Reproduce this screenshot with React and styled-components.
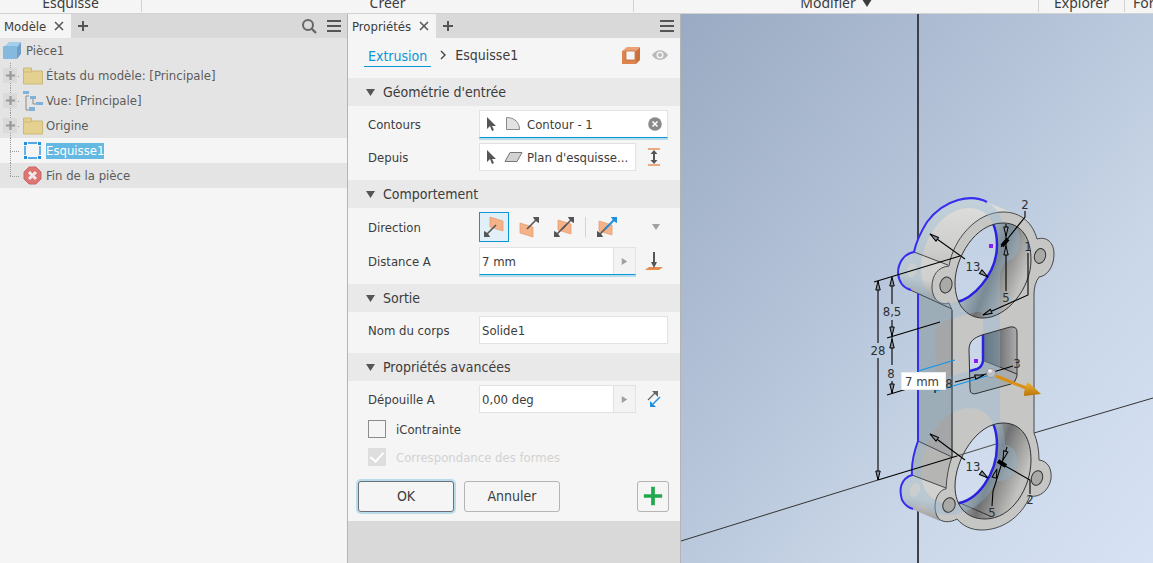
import React, { useState } from "react";
import styled, { createGlobalStyle, css } from "styled-components";

const GlobalStyle = createGlobalStyle`
  * {
    box-sizing: border-box;
  }
  body {
    margin: 0;
    color: #3c3c3c;
    font-family: "DejaVu Sans Condensed", "DejaVu Sans", sans-serif;
    font-size: 13px;
  }
  button,
  input {
    font: inherit;
    color: inherit;
  }
  svg {
    display: block;
    flex: none;
  }
`;

const Page = styled.div`
  display: flex;
  flex-direction: column;
  min-height: 100vh;
  background: #f5f5f5;
`;

/* ---------- ribbon ---------- */

const Ribbon = styled.header`
  display: grid;
  grid-template-columns: 142fr 492fr 405fr 86fr 28fr;
  height: 14px;
  overflow: hidden;
  border-bottom: 1px solid #d2d2d2;
`;

const RibbonGroup = styled.div`
  display: flex;
  min-width: 0;
  height: 12px;
  align-items: flex-end;
  justify-content: ${(p) => (p.$last ? "flex-start" : "center")};
  padding-left: ${(p) => (p.$last ? "8px" : "0")};
  border-right: ${(p) => (p.$last ? "none" : "1px solid #d2d2d2")};
  overflow: hidden;
`;

const RibbonLabel = styled.span`
  display: flex;
  align-items: center;
  gap: 6px;
  font-family: "Noto Sans", sans-serif;
  font-size: 14px;
  line-height: 18px;
  white-space: nowrap;
`;

const Workspace = styled.div`
  display: flex;
  flex: 1;
`;

/* ---------- shared panel parts ---------- */

const TabBar = styled.div`
  display: flex;
  height: 24px;
  align-items: center;
  background: #d9d9d9;
`;

const Tab = styled.div`
  display: flex;
  height: 24px;
  align-items: center;
  gap: 7px;
  padding: 0 6px 0 4px;
  background: #f5f5f5;
`;

const IconButton = styled.button`
  display: flex;
  align-items: center;
  justify-content: center;
  padding: 0;
  border: 0;
  background: none;
`;

const TabTools = styled.div`
  display: flex;
  gap: 10px;
  margin-left: auto;
  padding-right: 6px;
`;

const AddTab = styled(IconButton)`
  width: 24px;
  height: 24px;
`;

/* ---------- model browser ---------- */

const Browser = styled.aside`
  flex: none;
  width: 348px;
  border-right: 1px solid #b4b4b4;
`;

const Tree = styled.ul`
  margin: 0;
  padding: 0;
  list-style: none;
  background: #e4e4e4;
`;

const TreeRow = styled.li`
  display: flex;
  height: 25px;
  align-items: center;
  gap: 3px;
  padding-left: ${(p) => (p.$root ? "3px" : "0")};
  background: ${(p) => (p.$selected ? "#f5f5f5" : "transparent")};
  color: #5c5c5c;
`;

const Branch = styled.span`
  display: flex;
  width: 20px;
  height: 25px;
  align-items: center;
  padding-left: 3px;
  background:
    repeating-linear-gradient(to bottom, #9a9a9a 0 1px, transparent 1px 2px)
      10px 0 / 1px ${(p) => (p.$last ? "14px" : "25px")} no-repeat,
    repeating-linear-gradient(to right, #9a9a9a 0 1px, transparent 1px 2px)
      10px 13px / 10px 1px no-repeat;
`;

const Expander = styled(IconButton)`
  width: 14px;
  height: 15px;
  background: #dadada;
`;

const TreeLabel = styled.span`
  line-height: 16px;
  ${(p) =>
    p.$selected &&
    css`
      color: #fff;
      background: #64b9e2;
    `}
`;

/* ---------- property panel ---------- */

const Properties = styled.section`
  flex: none;
  width: 333px;
  border-right: 1px solid #b4b4b4;
  background: #d9d9d9;
`;

const Form = styled.form`
  background: #f5f5f5;
`;

const Crumbs = styled.nav`
  display: flex;
  height: 40px;
  align-items: center;
  gap: 6px;
  padding: 0 11px 6px 16px;
  font-size: 14px;
`;

const CrumbLink = styled.a`
  padding: 2px 4px 0;
  border-bottom: 1px solid #0a96d7;
  color: #0a96d7;
  line-height: 20px;
  text-decoration: none;
`;

const CrumbTools = styled.div`
  display: flex;
  align-items: center;
  gap: 10px;
  margin-left: auto;
`;

const SectionTitle = styled.h2`
  display: flex;
  height: 28px;
  align-items: center;
  gap: 8px;
  margin: 0;
  padding-left: 18px;
  background: #e9e9e9;
  font-size: 14px;
  font-weight: normal;
`;

const SectionBody = styled.div`
  display: flex;
  flex-direction: column;
  gap: 5px;
  padding: 4px 12px 9px 20px;
`;

const Row = styled.div`
  display: grid;
  grid-template-columns: 111px 1fr ${(p) => (p.$tool ? "32px" : "")};
  min-height: 28px;
  align-items: center;
`;

const ToolSlot = styled(IconButton)`
  padding-left: 4px;
`;

const Field = styled.div`
  display: flex;
  min-width: 0;
  height: 28px;
  align-items: stretch;
  border: 1px solid #e2e2e2;
  background: #fff;
  ${(p) =>
    p.$active &&
    css`
      border-bottom-color: #0a96d7;
      box-shadow: 0 2px 0 #b9dcea;
    `}
`;

const FieldIcons = styled.span`
  display: flex;
  align-items: center;
  gap: 7px;
  padding: 0 2px 0 7px;
`;

const TextInput = styled.input`
  flex: 1;
  min-width: 0;
  padding: 0 2px;
  border: 0;
  outline: 0;
  background: none;
`;

const ClearButton = styled(IconButton)`
  padding-right: 5px;
`;

const Flyout = styled(IconButton)`
  width: 22px;
  border-left: 1px solid #e2e2e2;
  background: #f3f3f3;
`;

const Directions = styled.div`
  display: flex;
  align-items: center;
  gap: 5px;
`;

const DirectionButton = styled(IconButton)`
  width: 30px;
  height: 30px;
  border: 1px solid ${(p) => (p.$on ? "#0a96d7" : "transparent")};
  background: ${(p) => (p.$on ? "#e1f0f8" : "none")};
`;

const Divider = styled.span`
  width: 1px;
  height: 20px;
  margin: 0 1px;
  background: #d4d4d4;
`;

const MoreButton = styled(IconButton)`
  width: 24px;
  height: 24px;
  margin-left: auto;
`;

const Checks = styled.div`
  display: flex;
  flex-direction: column;
  gap: 10px;
  padding-top: 2px;
`;

const CheckLabel = styled.label`
  display: flex;
  height: 18px;
  align-items: center;
  gap: 10px;
  color: ${(p) => (p.$off ? "#d2d2d2" : "inherit")};
`;

const CheckBox = styled.input`
  appearance: none;
  display: grid;
  place-content: center;
  width: 18px;
  height: 18px;
  margin: 0;
  border: 1px solid #8c8c8c;

  &:checked {
    border-color: #dedede;
    background: #dedede;
  }
  &:checked::after {
    content: "";
    width: 6px;
    height: 11px;
    margin-bottom: 3px;
    border: solid #fff;
    border-width: 0 2px 2px 0;
    transform: rotate(42deg);
  }
`;

const Footer = styled.div`
  display: flex;
  gap: 10px;
  padding: 6px 11px 9px 10px;
`;

const PushButton = styled.button`
  width: ${(p) => (p.$square ? "32px" : "96px")};
  height: 31px;
  display: flex;
  align-items: center;
  justify-content: center;
  margin-left: ${(p) => (p.$square ? "auto" : "0")};
  padding: 0 0 2px;
  border: 1px solid ${(p) => (p.$primary ? "#6e6e78" : "#b4b4b4")};
  border-radius: 3px;
  background: #f5f5f5;
  box-shadow: ${(p) => (p.$primary ? "0 0 0 2px #b9dcea" : "none")};
  font-size: 14px;
`;

/* ---------- 3D view ---------- */

const Viewport = styled.main`
  position: relative;
  flex: 1;
  min-width: 0;
  overflow: hidden;
  background: linear-gradient(130deg, #9aaac2 0%, #b5c4d9 42%, #cad7e8 70%, #d7e3f4 100%);
`;

const Scene = styled.svg`
  width: 100%;
  height: 100%;
`;

const Bubble = styled.input`
  position: absolute;
  left: 220px;
  top: 358px;
  width: 45px;
  height: 18px;
  padding: 0 3px;
  border: 1px solid #ececec;
  background: #fff;
`;

/* ---------- icons ---------- */

const Cross = () => (
  <svg width="12" height="12" viewBox="0 0 12 12">
    <path d="M2 2l8 8M10 2l-8 8" stroke="#555" strokeWidth="1.5" />
  </svg>
);

const Plus = ({ size = 12, color = "#555", weight = 2 }) => (
  <svg width={size} height={size} viewBox="0 0 12 12">
    <path d="M6 1v10M1 6h10" stroke={color} strokeWidth={weight} />
  </svg>
);

const Menu = () => (
  <svg width="14" height="14" viewBox="0 0 14 14">
    <path d="M0 2h14M0 7h14M0 12h14" stroke="#555" strokeWidth="2" />
  </svg>
);

const Search = () => (
  <svg width="16" height="16" viewBox="0 0 16 16" fill="none" stroke="#666">
    <circle cx="7" cy="7" r="5" strokeWidth="2" />
    <path d="M10.5 10.5l4.5 4.5" strokeWidth="2.4" />
  </svg>
);

const Triangle = ({ right, color = "#555", size = 9 }) => (
  <svg width={size} height={size} viewBox="0 0 9 9">
    <path d={right ? "M1 0l7 4.5-7 4.5z" : "M0 1h9l-4.500 7z"} fill={color} />
  </svg>
);

const PartIcon = () => (
  <svg width="20" height="20" viewBox="0 0 20 20">
    <path d="M1 6l5-5h12l-4 5z" fill="#a4cdec" />
    <path d="M14 6l4-5v12l-4 5z" fill="#6f9fc4" />
    <rect x="0" y="5" width="14" height="13" rx="1" fill="#86b9de" />
  </svg>
);

const FolderIcon = () => (
  <svg width="20" height="18" viewBox="0 0 20 18">
    <path d="M.5 1h8v3h11v13H.5z" fill="#e5d18f" stroke="#cdb87c" />
    <path d="M1 5h7l1-1" fill="none" stroke="#cdb87c" />
  </svg>
);

const ViewIcon = () => (
  <svg width="20" height="20" viewBox="0 0 20 20">
    <path d="M6 5H3v14h3M10 8v5h3" fill="none" stroke="#8a8a8a" />
    <path d="M0 0h6v3H0zM7 5h6v3H7zM13 11h7v3h-7zM6 16h6v4H6z" fill="#7fb2da" />
  </svg>
);

const SketchIcon = () => (
  <svg width="20" height="20" viewBox="0 0 20 20">
    <path d="M5 2h9M5 17h9M2 5v9M17 5v9" stroke="#1f8fe0" strokeWidth="1.3" />
    <path d="M1 1h3v3H1zM15 1h3v3h-3zM1 15h3v3H1zM15 15h3v3h-3z" fill="#1f8fe0" />
  </svg>
);

const EndIcon = () => (
  <svg width="20" height="20" viewBox="0 0 20 20">
    <path d="M6 1h7l5 5v7l-5 5H6l-5-5V6z" fill="#dd7572" stroke="#c96a68" />
    <path d="M6 6l7 7M13 6l-7 7" stroke="#f2e9e9" strokeWidth="3" />
  </svg>
);

const SolidIcon = () => (
  <svg width="19" height="19" viewBox="0 0 19 19">
    <path d="M0 5l5-4h13l-4 4z" fill="#eda074" />
    <path d="M14 5l4-4v13l-4 4z" fill="#cc6f3a" />
    <path d="M0 5h14v13H0z" fill="#dd834c" />
    <path d="M4 5h9v9H4z" fill="#f5f5f5" stroke="#b8632f" strokeWidth=".7" />
  </svg>
);

const EyeIcon = () => (
  <svg width="18" height="12" viewBox="0 0 18 12">
    <path d="M1 6c4-6.500 12-6.500 16 0-4 6.500-12 6.500-16 0z" fill="#b9b9b9" />
    <circle cx="9" cy="6" r="3.500" fill="#f5f5f5" />
    <circle cx="9" cy="6" r="2" fill="#b9b9b9" />
  </svg>
);

const Chevron = () => (
  <svg width="12" height="12" viewBox="0 0 12 12">
    <path d="M4 2l4 4-4 4" fill="none" stroke="#444" strokeWidth="1.4" />
  </svg>
);

const Pointer = () => (
  <svg width="10" height="16" viewBox="0 0 10 16">
    <path d="M0 1v12l3-3 2 5 2-1-2-4h4z" fill="#555" />
  </svg>
);

const ProfileIcon = () => (
  <svg width="19" height="16" viewBox="0 0 19 16">
    <path d="M2.500 1.500v12h13c0-7-5-12-13-12z" fill="#e2e2e2" stroke="#8a8a8a" />
  </svg>
);

const PlaneIcon = () => (
  <svg width="19" height="12" viewBox="0 0 19 12">
    <path d="M6 1.500h12l-5 9H1z" fill="#d2d2d2" stroke="#777" />
  </svg>
);

const ClearIcon = () => (
  <svg width="14" height="14" viewBox="0 0 14 14">
    <circle cx="7" cy="7" r="6.800" fill="#8a8a8a" />
    <path d="M4.500 4.500l5 5M9.500 4.500l-5 5" stroke="#fff" strokeWidth="1.500" />
  </svg>
);

const BetweenIcon = () => (
  <svg width="14" height="18" viewBox="0 0 14 18">
    <path d="M1 1h12M1 17h12" stroke="#e8935a" strokeWidth="1.500" />
    <path d="M7 4v10" stroke="#555" strokeWidth="2" />
    <path d="M3.500 6L7 2l3.500 4zM3.500 12L7 16l3.500-4z" fill="#555" />
  </svg>
);

const ToNextIcon = () => (
  <svg width="20" height="19" viewBox="0 0 20 19">
    <path d="M5 15h14l-4 3H1z" fill="#e58a50" />
    <path d="M10 0v12" stroke="#555" strokeWidth="2" />
    <path d="M7 10h6l-3 6z" fill="#555" />
  </svg>
);

const TaperIcon = () => (
  <svg width="14" height="18" viewBox="0 0 14 18">
    <path d="M1 10L8 3" stroke="#666" strokeWidth="1.300" />
    <path d="M5 1h6v6z" fill="#666" />
    <path d="M6 14l7-7" stroke="#1f8fe0" strokeWidth="1.500" />
    <path d="M3 11v6h6z" fill="#1f8fe0" />
  </svg>
);

const planePath = {
  default: "M7 1l13 4v10L7 11z",
  flipped: "M2 7l13 4v10L2 17z",
  symmetric: "M5 4l13 4v10L5 14z",
  asymmetric: "M3 5l13 4v10L3 15z",
};

const DirectionIcon = ({ kind }) => (
  <svg width="22" height="22" viewBox="0 0 22 22">
    <path d={planePath[kind]} fill="#f5b187" stroke="#e6a077" strokeWidth=".8" />
    {kind !== "flipped" && (
      <g stroke="#555" fill="#555">
        <path d="M3 19l10-10" strokeWidth="1.600" />
        <path d="M1 15l2 1 3 3 1 2H1z" stroke="none" />
      </g>
    )}
    {kind !== "default" && (
      <g
        stroke={kind === "asymmetric" ? "#1f8fe0" : "#555"}
        fill={kind === "asymmetric" ? "#1f8fe0" : "#555"}
      >
        <path d="M9 13l10-10" strokeWidth={kind === "asymmetric" ? 2 : 1.6} />
        <path d="M15 1h6v6l-2-1-3-3z" stroke="none" />
      </g>
    )}
  </svg>
);

/* ---------- model drawing ---------- */

// arrow head of a dimension line, its tip on (x, y)
const Head = ({ x, y, angle }) => (
  <path
    d="M0 0L-9 -2.200V2.200z"
    transform={`translate(${x} ${y}) rotate(${angle})`}
    fill="#8a919c"
    stroke="#000"
  />
);

const dimensions = [
  { x: 973, y: 271, text: "13" },
  { x: 1025, y: 209, text: "2" },
  { x: 1006, y: 302, text: "5" },
  { x: 1028, y: 251, text: "1" },
  { x: 892, y: 316, text: "8,5" },
  { x: 878, y: 355, text: "28" },
  { x: 891, y: 378, text: "8" },
  { x: 949, y: 388, text: "8" },
  { x: 1017, y: 368, text: "3" },
  { x: 973, y: 471, text: "13" },
  { x: 992, y: 517, text: "5" },
  { x: 1030, y: 504, text: "2" },
];

const topHole =
  "M955 283C955 258 975 223 1003 223C1023 223 1031 240 1031 260C1031 288 1007 318 983 318C966 318 955 304 955 283z";
const bottomHole =
  "M955 486C955 460 976 423 1003 423C1023 423 1031 440 1031 460C1031 488 1012 519 985 519C966 519 955 506 955 486z";
const pocket =
  "M969 350C969 341 974 338 982 335L1010 327Q1017 326 1017 332V376Q1016 382 1011 384L978 393Q970 396 970 389z";
const face =
  "M949 266C953 240 976 212 1003 212C1022 212 1033 224 1037 239C1047 236 1054 243 1054 254C1054 267 1047 276 1039 277Q1034 284 1034 294V433Q1039 445 1039 460C1048 461 1052 469 1051 479C1049 490 1040 498 1030 496C1021 518 1001 530 982 530C971 530 963 526 957 519C950 523 940 523 937 516C932 505 937 490 946 489Q947 470 952 457V310L949 303C940 306 932 299 932 287C932 275 938 267 949 266z";

// the sketch plane lies behind the front face by this offset
const toBack = "translate(-34 -15)";

const Opening = ({ clip, shape }) => (
  <g clipPath={`url(#${clip})`}>
    <path d={shape} transform={toBack} fill="url(#through)" stroke="#2a22e0" strokeWidth="2.500" />
  </g>
);

const Model = () => (
  <Scene viewBox="681 14 472 549" preserveAspectRatio="xMinYMin slice" aria-hidden="true">
    <defs>
      <linearGradient id="bore" x1="0" y1="0" x2="1" y2="0.5">
        <stop offset="0.3" stopColor="#c8c8c6" />
        <stop offset="0.6" stopColor="#6f7173" />
        <stop offset="0.72" stopColor="#8f8f8e" />
        <stop offset="0.95" stopColor="#c2c2c0" />
      </linearGradient>
      <linearGradient id="barrel" x1="0" y1="0" x2="0" y2="1">
        <stop offset="0" stopColor="#dfdfdd" />
        <stop offset="0.5" stopColor="#cececc" />
        <stop offset="1" stopColor="#adadac" />
      </linearGradient>
      <linearGradient id="lug" x1="0.4" y1="0" x2="0.2" y2="1">
        <stop offset="0" stopColor="#d4d4d2" />
        <stop offset="0.5" stopColor="#d0d0ce" />
        <stop offset="1" stopColor="#8d8e8f" />
      </linearGradient>
      <linearGradient id="recess" x1="0" y1="0" x2="1" y2="0">
        <stop offset="0.2" stopColor="#3f4c56" />
        <stop offset="0.6" stopColor="#6c6f71" />
        <stop offset="1" stopColor="#acacac" />
      </linearGradient>
      <linearGradient id="through" gradientUnits="userSpaceOnUse" x1="920" y1="200" x2="1010" y2="540">
        <stop offset="0" stopColor="#c0cee2" />
        <stop offset="1" stopColor="#d3dff0" />
      </linearGradient>
      <linearGradient id="gold" x1="0" y1="0" x2="0" y2="1">
        <stop offset="0" stopColor="#f3b434" />
        <stop offset="1" stopColor="#b97508" />
      </linearGradient>
      <clipPath id="clipTop">
        <path d={topHole} />
      </clipPath>
      <clipPath id="clipBottom">
        <path d={bottomHole} />
      </clipPath>
      <clipPath id="clipPocket">
        <path d={pocket} />
      </clipPath>
    </defs>

    {/* work planes */}
    <path d="M918 14V563" stroke="#3c4048" strokeWidth="2" />
    <path d="M681 541L878 480M1034 433L1153 398" stroke="#333" />

    {/* extruded sides */}
    <path
      d="M1030 220L987 202C972 193 944 198 927 222Q917 238 914 252L940 300L990 290z"
      fill="url(#barrel)"
    />
    <path d="M918 288L953 304V457L918 441z" fill="#a5a6a7" />
    <path d="M918 441L953 457L947 490L912 475Q912 455 918 441z" fill="#b5b5b3" />
    <path
      d="M914 252L948 266L937 302L908 289C899 284 897 273 900 264Q905 254 914 252z"
      fill="url(#lug)"
    />
    <path
      d="M912 475L946 488L940 521L912 509C900 503 899 488 905 480z"
      fill="url(#lug)"
    />

    {/* front */}
    <path d={face} fill="#c6c6c5" stroke="#45484c" />
    <path d={topHole} fill="url(#bore)" />
    <path d={bottomHole} fill="url(#bore)" />
    <path d={pocket} fill="url(#recess)" />
    <g clipPath="url(#clipPocket)">
      <path d="M982 360L1017 374V400H965V373Q982 370 982 360z" fill="#a9abac" />
      <path d="M982 360L1017 374" stroke="#333" />
    </g>
    <g clipPath="url(#clipBottom)">
      <path d="M960 503L990 516" stroke="#333" />
    </g>

    {/* sketch profile seen through the solid */}
    <path
      d={`${face}${topHole}${bottomHole}${pocket}`}
      transform={toBack}
      fill="#8fbad6"
      fillRule="evenodd"
      opacity=".36"
    />
    <g fill="#d2d0ce" opacity=".75">
      <ellipse cx="912" cy="270" rx="5" ry="7" transform="rotate(15 912 270)" />
      <ellipse cx="915" cy="490" rx="5" ry="7" transform="rotate(20 915 490)" />
    </g>

    <Opening clip="clipTop" shape={topHole} />
    <Opening clip="clipBottom" shape={bottomHole} />
    <Opening clip="clipPocket" shape={pocket} />
    <g fill="none" stroke="#333">
      <path d={topHole} />
      <path d={bottomHole} />
      <path d={pocket} />
    </g>

    <g fill="#a9a9a8" stroke="#333">
      <ellipse cx="946" cy="285" rx="6" ry="8" transform="rotate(15 946 285)" />
      <ellipse cx="1040" cy="256" rx="5.500" ry="7.500" transform="rotate(15 1040 256)" />
      <ellipse cx="949" cy="505" rx="6" ry="7.500" transform="rotate(20 949 505)" />
      <ellipse cx="1037" cy="478" rx="5.500" ry="7.500" transform="rotate(20 1037 478)" />
    </g>

    {/* edges */}
    <path
      d="M914 252L948 265M908 289L952 309M918 441L952 457M912 475L946 488M952 310V457"
      fill="none"
      stroke="#45484c"
    />
    <path
      d="M987 202C972 194 945 198 927 222Q917 238 914 252C903 254 898 264 898 273C899 283 903 288 911 290M918 294V441Q911 460 912 475C900 479 899 490 902 500Q906 507 913 509"
      fill="none"
      stroke="#372df0"
      strokeWidth="2"
    />

    {/* sketch lines */}
    <path d="M918 371L955 360M936 391L990 375" stroke="#1494ec" strokeWidth="1.200" />

    {/* dimensions */}
    <g fill="none" stroke="#000" strokeWidth="1.100">
      <path d="M878 281V343M878 358V480M874 282L960 256M878 480L957 456" />
      <path d="M957 456L996 444" stroke="#555" />
      <path d="M892 279V304M892 320V365M892 381V393M887 338L940 322M887 395L920 385" />
      <path d="M930 234L965 259M981 272L988 277M930 434L965 460M981 473L988 478" />
      <path d="M1025 211V217L1001 247M1006 224V291M1028 253V295L983 315" />
      <path d="M935 388V393M955 382L990 373L1013 366" />
      <path d="M992 506L993 491L1007 447M1030 494V480L1000 463" />
    </g>
    <Head x={930} y={234} angle={216} />
    <Head x={988} y={277} angle={36} />
    <Head x={930} y={434} angle={216} />
    <Head x={988} y={478} angle={36} />
    <Head x={878} y={281} angle={270} />
    <Head x={878} y={480} angle={90} />
    <Head x={892} y={277} angle={270} />
    <Head x={892} y={336} angle={90} />
    <Head x={892} y={339} angle={270} />
    <Head x={892} y={393} angle={90} />
    <Head x={1006} y={236} angle={90} />
    <Head x={1006} y={246} angle={270} />
    <Head x={983} y={315} angle={156} />
    <Head x={984} y={375} angle={-14} />
    <Head x={1003} y={460} angle={108} />
    <Head x={997} y={469} angle={288} />
    <path d="M1002 246l6-7M998 461l8 5" stroke="#000" strokeWidth="4" />
    <g fontFamily="'DejaVu Sans Condensed', 'DejaVu Sans', sans-serif" fontSize="13" textAnchor="middle" fill="#2c2f33">
      {dimensions.map((d) => (
        <text key={`${d.x}-${d.y}`} x={d.x} y={d.y}>
          {d.text}
        </text>
      ))}
    </g>

    {/* sketch points */}
    <path d="M989 244h4v4h-4zM974 359h4v4h-4z" fill="#8a1cf5" />

    {/* drag handle */}
    <path d="M996 376L1026 388" stroke="#d98f14" strokeWidth="3" />
    <path d="M1028 382L1041 394L1024 396Q1024 387 1028 382z" fill="url(#gold)" />
    <circle cx="991" cy="373" r="4.500" fill="#bcbcc2" stroke="#85858a" strokeWidth=".6" />
    <circle cx="990" cy="371" r="1.800" fill="#f2f2f5" />
  </Scene>
);

/* ---------- data ---------- */

const ribbonGroups = [
  { label: "Esquisse" },
  { label: "Créer" },
  { label: "Modifier", menu: true },
  { label: "Explorer" },
  { label: "Format", last: true },
];

const nodes = [
  { label: "États du modèle: [Principale]", icon: <FolderIcon />, open: true },
  { label: "Vue: [Principale]", icon: <ViewIcon />, open: true },
  { label: "Origine", icon: <FolderIcon />, open: true },
  { label: "Esquisse1", icon: <SketchIcon />, selected: true },
  { label: "Fin de la pièce", icon: <EndIcon />, last: true },
];

const Section = ({ title, children }) => (
  <>
    <SectionTitle>
      <Triangle />
      {title}
    </SectionTitle>
    <SectionBody>{children}</SectionBody>
  </>
);

const ModelBrowser = () => (
  <Browser>
    <TabBar>
      <Tab>
        Modèle
        <IconButton aria-label="Fermer">
          <Cross />
        </IconButton>
      </Tab>
      <AddTab aria-label="Ajouter">
        <Plus />
      </AddTab>
      <TabTools>
        <IconButton aria-label="Rechercher">
          <Search />
        </IconButton>
        <IconButton aria-label="Menu">
          <Menu />
        </IconButton>
      </TabTools>
    </TabBar>
    <Tree>
      <TreeRow $root>
        <PartIcon />
        <TreeLabel>Pièce1</TreeLabel>
      </TreeRow>
      {nodes.map((n) => (
        <TreeRow key={n.label} $selected={n.selected}>
          <Branch $last={n.last}>
            {n.open && (
              <Expander aria-label="Développer">
                <Plus size={11} color="#999" weight={2.4} />
              </Expander>
            )}
          </Branch>
          {n.icon}
          <TreeLabel $selected={n.selected}>{n.label}</TreeLabel>
        </TreeRow>
      ))}
    </Tree>
  </Browser>
);

const directionKinds = ["default", "flipped", "symmetric", "asymmetric"];

const PropertyPanel = ({ distance, setDistance }) => {
  const [direction, setDirection] = useState("default");
  const [body, setBody] = useState("Solide1");
  const [taper, setTaper] = useState("0,00 deg");

  return (
    <Properties>
      <TabBar>
        <Tab>
          Propriétés
          <IconButton aria-label="Fermer">
            <Cross />
          </IconButton>
        </Tab>
        <AddTab aria-label="Ajouter">
          <Plus />
        </AddTab>
        <TabTools>
          <IconButton aria-label="Menu">
            <Menu />
          </IconButton>
        </TabTools>
      </TabBar>
      <Form onSubmit={(e) => e.preventDefault()}>
        <Crumbs>
          <CrumbLink href="#extrusion">Extrusion</CrumbLink>
          <Chevron />
          <span>Esquisse1</span>
          <CrumbTools>
            <SolidIcon />
            <EyeIcon />
          </CrumbTools>
        </Crumbs>

        <Section title="Géométrie d'entrée">
          <Row>
            <label htmlFor="contours">Contours</label>
            <Field $active>
              <FieldIcons>
                <Pointer />
                <ProfileIcon />
              </FieldIcons>
              <TextInput id="contours" readOnly value="Contour - 1" />
              <ClearButton type="button" aria-label="Effacer">
                <ClearIcon />
              </ClearButton>
            </Field>
          </Row>
          <Row $tool>
            <label htmlFor="depuis">Depuis</label>
            <Field>
              <FieldIcons>
                <Pointer />
                <PlaneIcon />
              </FieldIcons>
              <TextInput id="depuis" readOnly value="Plan d'esquisse..." />
            </Field>
            <ToolSlot type="button" aria-label="Entre">
              <BetweenIcon />
            </ToolSlot>
          </Row>
        </Section>

        <Section title="Comportement">
          <Row>
            <span id="direction">Direction</span>
            <Directions role="group" aria-labelledby="direction">
              {directionKinds.map((kind) => (
                <React.Fragment key={kind}>
                  {kind === "asymmetric" && <Divider />}
                  <DirectionButton
                    type="button"
                    aria-label={kind}
                    aria-pressed={direction === kind}
                    $on={direction === kind}
                    onClick={() => setDirection(kind)}
                  >
                    <DirectionIcon kind={kind} />
                  </DirectionButton>
                </React.Fragment>
              ))}
              <MoreButton type="button" aria-label="Plus">
                <Triangle color="#a0a0a0" size={8} />
              </MoreButton>
            </Directions>
          </Row>
          <Row $tool>
            <label htmlFor="distance">Distance A</label>
            <Field $active>
              <TextInput
                id="distance"
                value={distance}
                onChange={(e) => setDistance(e.target.value)}
              />
              <Flyout type="button" aria-label="Options de distance">
                <Triangle right color="#a0a0a0" size={7} />
              </Flyout>
            </Field>
            <ToolSlot type="button" aria-label="Jusqu'à">
              <ToNextIcon />
            </ToolSlot>
          </Row>
        </Section>

        <Section title="Sortie">
          <Row>
            <label htmlFor="corps">Nom du corps</label>
            <Field>
              <TextInput id="corps" value={body} onChange={(e) => setBody(e.target.value)} />
            </Field>
          </Row>
        </Section>

        <Section title="Propriétés avancées">
          <Row $tool>
            <label htmlFor="depouille">Dépouille A</label>
            <Field>
              <TextInput id="depouille" value={taper} onChange={(e) => setTaper(e.target.value)} />
              <Flyout type="button" aria-label="Options de dépouille">
                <Triangle right color="#a0a0a0" size={7} />
              </Flyout>
            </Field>
            <ToolSlot type="button" aria-label="Inverser">
              <TaperIcon />
            </ToolSlot>
          </Row>
          <Checks>
            <CheckLabel>
              <CheckBox type="checkbox" />
              iContrainte
            </CheckLabel>
            <CheckLabel $off>
              <CheckBox type="checkbox" defaultChecked disabled />
              Correspondance des formes
            </CheckLabel>
          </Checks>
        </Section>

        <Footer>
          <PushButton $primary>OK</PushButton>
          <PushButton type="button">Annuler</PushButton>
          <PushButton type="button" $square aria-label="Appliquer">
            <Plus size={22} color="#22a84c" weight={2} />
          </PushButton>
        </Footer>
      </Form>
    </Properties>
  );
};

const App = () => {
  const [distance, setDistance] = useState("7 mm");

  return (
    <Page>
      <GlobalStyle />
      <Ribbon>
        {ribbonGroups.map((g) => (
          <RibbonGroup key={g.label} $last={g.last}>
            <RibbonLabel>
              {g.label}
              {g.menu && <Triangle size={10} color="#3c3c3c" />}
            </RibbonLabel>
          </RibbonGroup>
        ))}
      </Ribbon>
      <Workspace>
        <ModelBrowser />
        <PropertyPanel distance={distance} setDistance={setDistance} />
        <Viewport>
          <Model />
          <Bubble
            aria-label="Distance"
            value={distance}
            onChange={(e) => setDistance(e.target.value)}
          />
        </Viewport>
      </Workspace>
    </Page>
  );
};

export default App;
